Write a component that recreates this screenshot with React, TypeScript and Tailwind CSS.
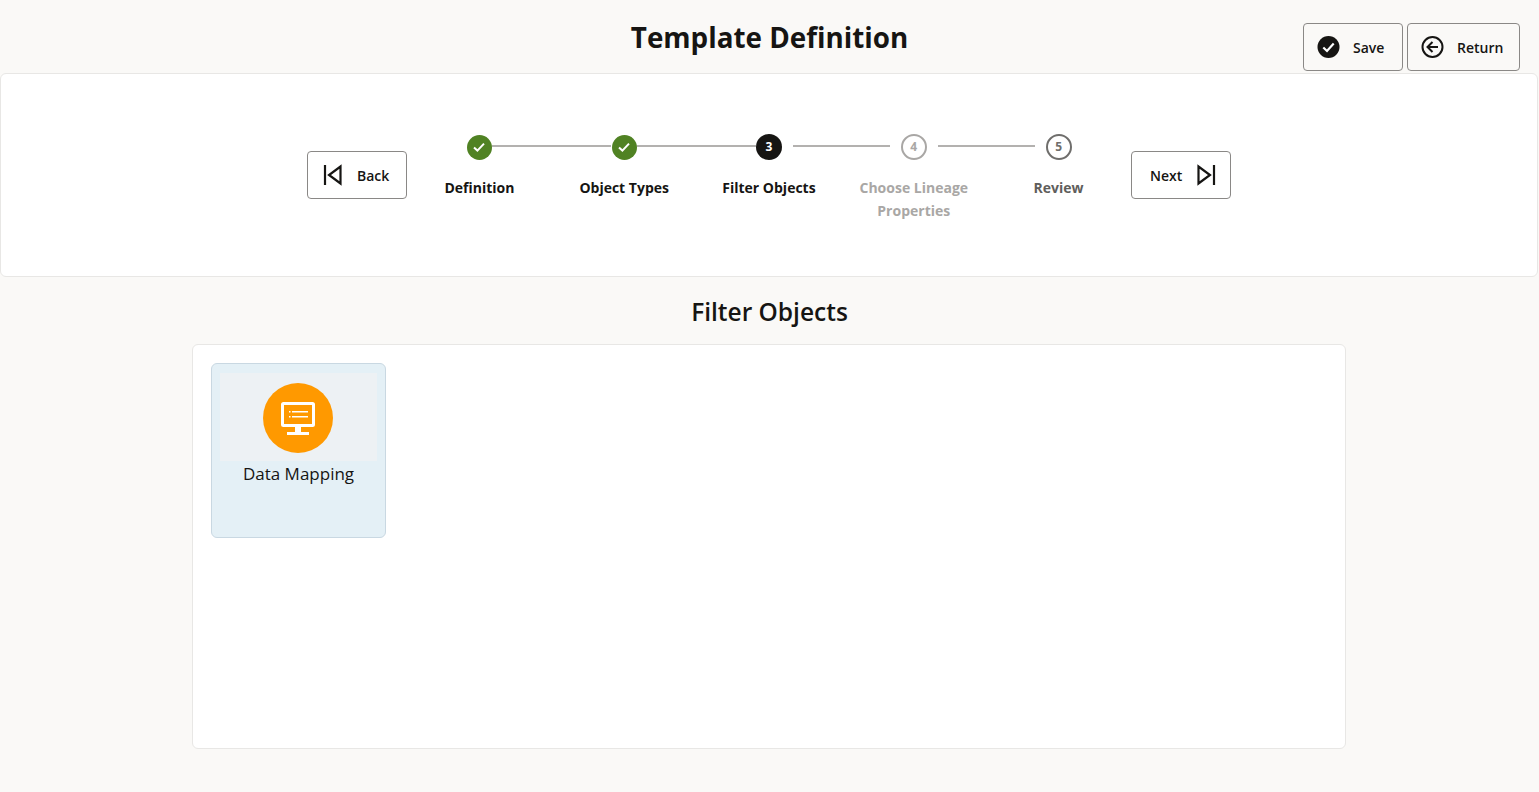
const font = { fontFamily: '"Open Sans", "Noto Sans", sans-serif' }

type Step = {
  label: string
  state: "done" | "current" | "todo" | "next"
}

const steps: Step[] = [
  { label: "Definition", state: "done" },
  { label: "Object Types", state: "done" },
  { label: "Filter Objects", state: "current" },
  { label: "Choose Lineage Properties", state: "todo" },
  { label: "Review", state: "next" },
]

function CheckIcon() {
  return (
    <svg width="16" height="16" viewBox="0 0 16 16" fill="none">
      <path d="M3 8.5L6.4 11.6L13 4.6" stroke="white" strokeWidth="2" />
    </svg>
  )
}

function SaveIcon() {
  return (
    <svg width="24" height="24" viewBox="0 0 24 24" fill="none">
      <circle cx="11.5" cy="12" r="11" fill="#161513" />
      <path d="M6.3 12.5L10 16L16.7 8.6" stroke="white" strokeWidth="2.2" />
    </svg>
  )
}

function ReturnIcon() {
  return (
    <svg width="24" height="24" viewBox="0 0 24 24" fill="none">
      <circle cx="11.5" cy="12" r="10" stroke="#161513" strokeWidth="2" />
      <path d="M17 12H7M11.5 7L6.5 12L11.5 17" stroke="#161513" strokeWidth="2" />
    </svg>
  )
}

function BackIcon() {
  return (
    <svg width="20" height="22" viewBox="0 0 20 22" fill="none">
      <path d="M2 1V21" stroke="#161513" strokeWidth="2.2" />
      <path d="M17.5 2.5V19.5L6 11Z" stroke="#161513" strokeWidth="2.2" />
    </svg>
  )
}

function NextIcon() {
  return (
    <svg width="20" height="22" viewBox="0 0 20 22" fill="none">
      <path d="M18 1V21" stroke="#161513" strokeWidth="2.2" />
      <path d="M2.5 2.5V19.5L14 11Z" stroke="#161513" strokeWidth="2.2" />
    </svg>
  )
}

function MonitorIcon() {
  return (
    <svg width="36" height="36" viewBox="0 0 36 36" fill="none">
      <rect x="2.5" y="3.5" width="31" height="22" stroke="white" strokeWidth="3" rx="1" />
      <rect x="15" y="27" width="6" height="5" fill="white" />
      <rect x="7" y="32" width="22" height="3" fill="white" />
      <rect x="9" y="11" width="1.5" height="1.5" fill="white" />
      <rect x="12" y="11" width="16" height="1.5" fill="white" />
      <rect x="9" y="16" width="1.5" height="1.5" fill="white" />
      <rect x="12" y="16" width="16" height="1.5" fill="white" />
    </svg>
  )
}

function ActionButton({ children, className }: { children: React.ReactNode; className: string }) {
  return (
    <button className={`flex h-12 items-center rounded border border-[#8a8886] text-[14px] font-semibold text-[#161513] ${className}`}>
      {children}
    </button>
  )
}

function StepItem({ step, index }: { step: Step; index: number }) {
  const first = index === 0
  const last = index === steps.length - 1
  const leftGap = step.state === "todo" || step.state === "next"
  const rightGap = step.state === "todo" || step.state === "current"

  return (
    <div className="flex w-[144.8px] flex-col items-center">
      <div className="flex h-[26px] w-full items-center">
        <div className="w-[59.4px]">
          <div className={`h-0.5 -translate-y-px ${first ? "" : "bg-[#b3b1af]"} ${leftGap ? "mr-[11px]" : ""}`} />
        </div>
        <div className="flex w-[26px] justify-center">
          {step.state === "done" && (
            <div className="flex h-[25px] w-[25px] items-center justify-center rounded-full bg-[#508223]">
              <CheckIcon />
            </div>
          )}
          {step.state === "current" && (
            <div className="flex h-[26px] w-[26px] items-center justify-center rounded-full bg-[#161513] text-[12px] font-bold text-white">
              3
            </div>
          )}
          {step.state === "todo" && (
            <div className="flex h-[26px] w-[26px] items-center justify-center rounded-full border-2 border-[#a9a7a5] text-[12px] font-bold text-[#a9a7a5]">
              4
            </div>
          )}
          {step.state === "next" && (
            <div className="flex h-[26px] w-[26px] items-center justify-center rounded-full border-2 border-[#6f6e6c] text-[12px] font-bold text-[#6f6e6c]">
              5
            </div>
          )}
        </div>
        <div className="w-[59.4px]">
          <div className={`h-0.5 -translate-y-px ${last ? "" : "bg-[#b3b1af]"} ${rightGap ? "ml-[11px]" : ""}`} />
        </div>
      </div>
      <div
        className={`mt-4 w-[130px] text-center text-[14px] font-bold leading-[23px] ${
          step.state === "todo" ? "text-[#a9a7a5]" : step.state === "next" ? "text-[#5f5e5c]" : "text-[#161513]"
        }`}
      >
        {step.label}
      </div>
    </div>
  )
}

export default function App() {
  return (
    <div style={font} className="h-[792px] overflow-hidden bg-[#faf9f7] text-[#161513]">
      <div className="grid h-[73px] grid-cols-[1fr_auto_1fr]">
        <div />
        <h1 className="pt-[17px] text-center text-[27.8px] font-bold leading-10">Template Definition</h1>
        <div className="flex items-start justify-end gap-1 pr-[19px] pt-[23px]">
          <ActionButton className="w-[100px] gap-3 pl-[13px]">
            <SaveIcon />
            Save
          </ActionButton>
          <ActionButton className="w-[113px] gap-3 pl-[13px]">
            <ReturnIcon />
            Return
          </ActionButton>
        </div>
      </div>

      <div className="mr-px flex h-[204px] justify-center rounded-md border border-[#e8e7e5] bg-white pt-[60px]">
        <div className="flex items-start">
          <ActionButton className="mt-[17px] w-[100px] gap-[14px] pl-[15px]">
            <BackIcon />
            Back
          </ActionButton>
          {steps.map((step, i) => (
            <StepItem key={step.label} step={step} index={i} />
          ))}
          <ActionButton className="mt-[17px] w-[100px] gap-[14px] pl-[18px]">
            Next
            <NextIcon />
          </ActionButton>
        </div>
      </div>

      <h2 className="mt-[19px] text-center text-[24.5px] font-semibold leading-8">Filter Objects</h2>

      <div className="ml-[192px] mt-[16px] h-[405px] w-[1154px] rounded-md border border-[#e8e7e5] bg-white p-[18px]">
        <div className="h-[175px] w-[175px] rounded-md border border-[#c9d8e2] bg-[#e4f0f6] px-2 pt-[9px]">
          <div className="flex h-[88px] justify-center bg-[#edf1f4] pr-px pt-[10px]">
            <div className="flex h-[70px] w-[70px] items-center justify-center rounded-full bg-[#ff9900]">
              <MonitorIcon />
            </div>
          </div>
          <div className="mt-px text-center text-[17px] leading-6">Data Mapping</div>
        </div>
      </div>
    </div>
  )
}
